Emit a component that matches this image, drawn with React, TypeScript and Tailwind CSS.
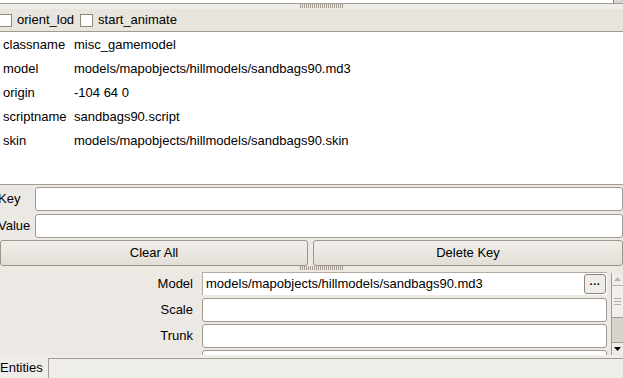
const ROWS: [string, string][] = [
  ["classname", "misc_gamemodel"],
  ["model", "models/mapobjects/hillmodels/sandbags90.md3"],
  ["origin", "-104 64 0"],
  ["scriptname", "sandbags90.script"],
  ["skin", "models/mapobjects/hillmodels/sandbags90.skin"],
];

function Grip() {
  return (
    <div className="flex h-[5px] justify-center">
      <div className="ml-[20px] h-[4px] w-[43px] bg-[repeating-linear-gradient(90deg,#a39b90_0_1px,transparent_1px_2px)]" />
    </div>
  );
}

function Checkbox({ label }: { label: string }) {
  return (
    <label className="flex items-center gap-[5px]">
      <span className="h-[13px] w-[13px] border border-[#8f877c] bg-white" />
      <span>{label}</span>
    </label>
  );
}

function Field({ className = "" }: { className?: string }) {
  return (
    <div
      className={`h-[24px] rounded-[3px] border border-[#a29a8f] bg-white ${className}`}
    />
  );
}

export default function App() {
  return (
    <div className="flex h-[378px] w-[623px] flex-col overflow-hidden bg-[#ece9e4] text-[13px] text-black [font-family:'Liberation_Sans',Arial,sans-serif]">
      {/* clipped property strip from above */}
      <div className="relative h-[4px] overflow-hidden border-b border-[#a39b90] bg-white">
        <div className="absolute -top-[13px] left-[4px] whitespace-pre text-[12px] leading-[16px]">
          {"l    ll   l l   l      l   l    lll  l   l     l    l    l   l        l     l  l     l      l     lll   l     l   l"}
        </div>
        <div className="absolute right-0 top-0 h-[4px] w-[10px] border-l border-[#8f877c] bg-[#d9d4cc]" />
      </div>
      <div className="bg-[#efede9]">
        <Grip />
      </div>

      {/* spawnflags */}
      <div className="-ml-px flex h-[22px] items-center gap-[6px] bg-[#e8e4de]">
        <Checkbox label="orient_lod" />
        <Checkbox label="start_animate" />
      </div>

      {/* key/value list */}
      <div className="h-[154px] border-y border-[#a39b90] bg-white pt-px">
        {ROWS.map(([k, v]) => (
          <div key={k} className="flex h-[24px] items-center">
            <span className="w-[74px] pl-[3px]">{k}</span>
            <span>{v}</span>
          </div>
        ))}
      </div>

      {/* key / value editor */}
      <div className="flex flex-col gap-[3px] pt-[2px]">
        <div className="flex items-center">
          <span className="-ml-[2px] w-[37px]">Key</span>
          <Field className="flex-1" />
        </div>
        <div className="flex items-center">
          <span className="-ml-[2px] w-[37px]">Value</span>
          <Field className="flex-1" />
        </div>
      </div>
      <div className="mt-[2px] flex gap-[5px]">
        <button className="h-[26px] w-[308px] rounded-[3px] border border-[#9e968b] bg-[linear-gradient(#f1efeb,#e2ded7)]">
          Clear All
        </button>
        <button className="h-[26px] flex-1 rounded-[3px] border border-[#9e968b] bg-[linear-gradient(#f1efeb,#e2ded7)]">
          Delete Key
        </button>
      </div>
      <Grip />

      {/* entity properties */}
      <div className="flex h-[84px] overflow-hidden">
        <div className="flex flex-1 flex-col gap-[2px] pt-[1px]">
          <div className="flex items-center">
            <span className="w-[197px] pr-[4px] text-right">Model</span>
            <div className="ml-[5px] flex h-[23px] flex-1 items-center border-l border-t border-[#b3aca2] bg-white pl-[3px] pr-px">
              <span className="flex-1">models/mapobjects/hillmodels/sandbags90.md3</span>
              <span className="flex h-[20px] w-[22px] items-center justify-center rounded-[3px] border border-[#8f877c] bg-[#efede9] text-[11px] font-bold leading-none">
                ···
              </span>
            </div>
          </div>
          <div className="flex items-center pt-px">
            <span className="w-[197px] pr-[4px] text-right">Scale</span>
            <Field className="ml-[5px] flex-1" />
          </div>
          <div className="flex items-center">
            <span className="w-[197px] pr-[4px] text-right">Trunk</span>
            <Field className="ml-[5px] flex-1" />
          </div>
          <div className="flex items-center">
            <span className="w-[197px]" />
            <Field className="ml-[5px] flex-1" />
          </div>
        </div>
        <div className="ml-[4px] mt-[2px] flex w-[12px] flex-col border-l border-[#a39b90] bg-[#d8d3cb]">
          <div className="flex h-[13px] items-center justify-center border-b border-[#b9b2a8] bg-[#efede9]">
            <svg width="7" height="4" viewBox="0 0 7 4">
              <path d="M0 4 L3.5 0 L7 4Z" fill="#bdb6ac" />
            </svg>
          </div>
          <div className="flex h-[32px] flex-col items-center justify-center gap-[2px] border-b border-[#a39b90] bg-[#f1efeb]">
            <div className="h-px w-[7px] bg-[#b3aca2]" />
            <div className="h-px w-[7px] bg-[#b3aca2]" />
            <div className="h-px w-[7px] bg-[#b3aca2]" />
          </div>
          <div className="flex-1" />
          <div className="flex h-[13px] items-center justify-center border-t border-[#a39b90] bg-[#efede9]">
            <svg width="7" height="4" viewBox="0 0 7 4">
              <path d="M0 0 L7 0 L3.5 4Z" fill="#000" />
            </svg>
          </div>
        </div>
      </div>

      {/* entity list */}
      <div className="flex flex-1 items-end bg-[#efede9] pt-[3px]">
        <span className="w-[48px] pb-px leading-[18px]">Entities</span>
        <div className="h-full flex-1 border-l border-t border-[#a39b90] bg-[#efede9]" />
      </div>
    </div>
  );
}
